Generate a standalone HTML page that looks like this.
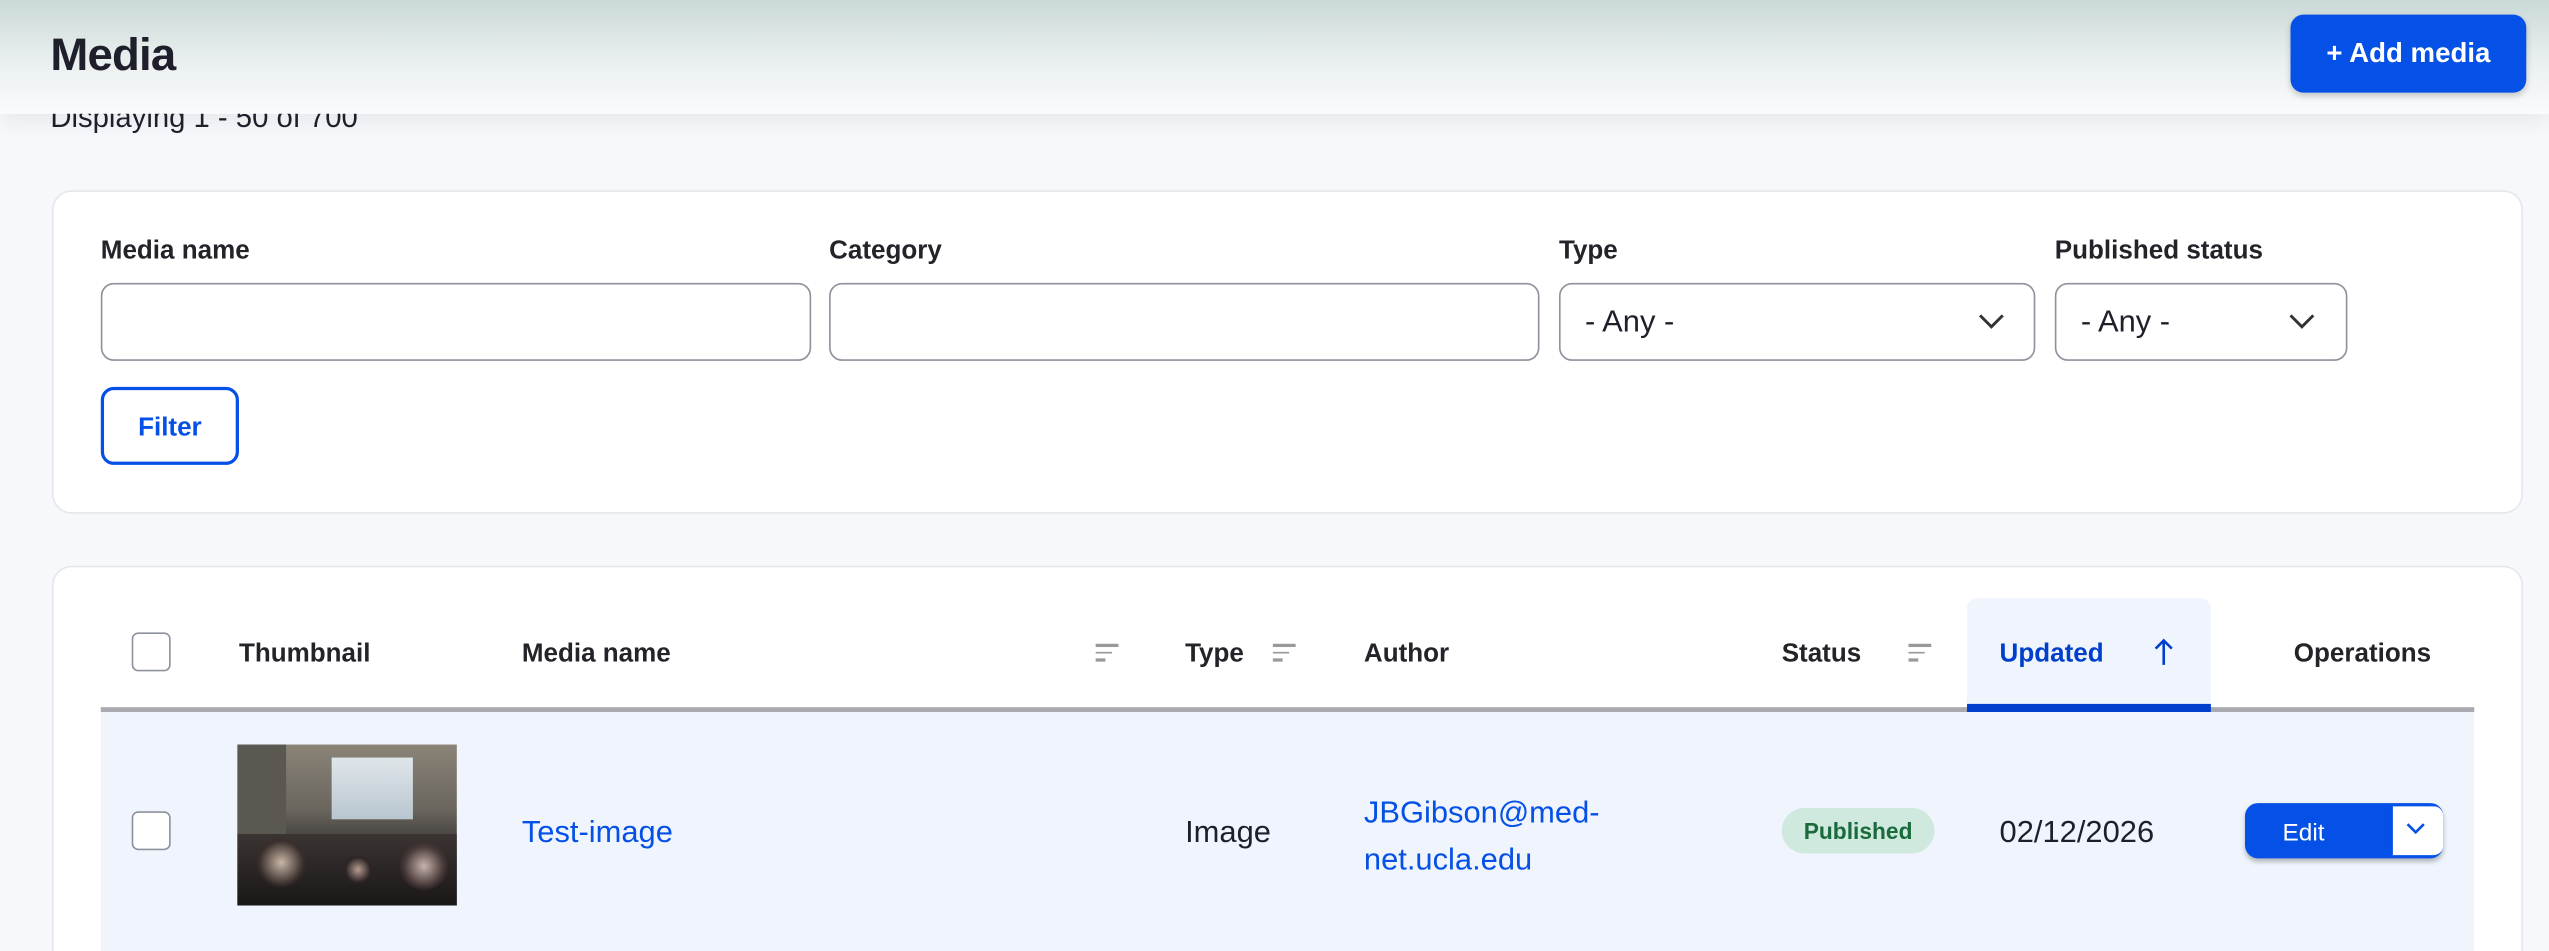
<!DOCTYPE html>
<html><head><meta charset="utf-8"><style>
html,body{margin:0;padding:0;width:2549px;height:951px;overflow:hidden;background:#f7f8fc;}
#clip{position:absolute;left:0;top:0;width:2549px;height:951px;overflow:hidden;}
#w{position:absolute;left:0;top:0;width:1568px;height:585px;overflow:hidden;transform:scale(1.62564);transform-origin:0 0;font-family:"Liberation Sans",sans-serif;color:#1f1f2b;}
.a{position:absolute;}
.lbl{font-size:16px;font-weight:bold;color:#232429;}
.inp{position:absolute;height:48px;border:1px solid #8e929c;border-radius:8px;background:#fff;box-sizing:border-box;}
.th{position:absolute;top:394px;font-size:16px;font-weight:bold;color:#232429;}
.cb{position:absolute;width:24px;height:24px;border:1px solid #8e929c;border-radius:4px;background:#fff;box-sizing:border-box;}
.sort{position:absolute;width:14px;height:10px;}
.sort i{display:block;height:1.5px;background:#999;margin-bottom:3px;}
</style></head><body><div id="clip"><div id="w">
<div class="a" style="left:0;top:0;width:1568px;height:70px;background:linear-gradient(#c9d9d7 0,#e8eeee 35px,#fafbfc 70px);box-shadow:0 6px 12px rgba(0,0,0,.06);"></div>
<div class="a" style="left:31px;top:18px;font-size:28px;font-weight:bold;letter-spacing:-0.5px;">Media</div>
<div class="a" style="left:31px;top:62px;font-size:18px;height:21px;overflow:hidden;clip-path:inset(8px 0 0 0);">Displaying 1 - 50 of 700</div>
<div class="a" style="left:1409px;top:9px;width:145px;height:48px;background:#0550e6;border-radius:8px;color:#fff;font-size:17px;font-weight:bold;text-align:center;line-height:48px;box-shadow:0 2px 4px rgba(0,0,0,.2);">+ Add media</div>

<div class="a" style="left:32px;top:117px;width:1520px;height:199px;background:#fff;border:1px solid #e5e7eb;border-radius:12px;box-sizing:border-box;"></div>
<div class="a lbl" style="left:62px;top:146px;">Media name</div>
<div class="a lbl" style="left:510px;top:146px;">Category</div>
<div class="a lbl" style="left:959px;top:146px;">Type</div>
<div class="a lbl" style="left:1264px;top:146px;">Published status</div>
<div class="inp" style="left:62px;top:174px;width:437px;"></div>
<div class="inp" style="left:510px;top:174px;width:437px;"></div>
<div class="inp" style="left:959px;top:174px;width:293px;font-size:19px;line-height:48px;padding-left:15px;">- Any -<svg style="position:absolute;right:18px;top:18px" width="16" height="10"><path d="M1 1l7 7 7-7" stroke="#333" stroke-width="1.8" fill="none"/></svg></div>
<div class="inp" style="left:1264px;top:174px;width:180px;font-size:19px;line-height:48px;padding-left:15px;">- Any -<svg style="position:absolute;right:19px;top:18px" width="16" height="10"><path d="M1 1l7 7 7-7" stroke="#333" stroke-width="1.8" fill="none"/></svg></div>
<div class="a" style="left:62px;top:238px;width:85px;height:48px;border:2px solid #0550e6;border-radius:8px;box-sizing:border-box;color:#0550e6;font-size:16px;font-weight:bold;text-align:center;line-height:48px;">Filter</div>

<div class="a" style="left:32px;top:348px;width:1520px;height:300px;background:#fff;border:1px solid #e5e7eb;border-radius:12px;box-sizing:border-box;"></div>
<div class="a" style="left:1210px;top:368px;width:150px;height:68px;background:#f0f5fd;border-radius:6px 6px 0 0;"></div>
<div class="cb" style="left:81px;top:389px;"></div>
<div class="th" style="left:147px;">Thumbnail</div>
<div class="th" style="left:321px;">Media name</div>
<div class="sort" style="left:674px;top:396px;"><i style="width:14px"></i><i style="width:10px"></i><i style="width:6px"></i></div>
<div class="th" style="left:729px;">Type</div>
<div class="sort" style="left:783px;top:396px;"><i style="width:14px"></i><i style="width:10px"></i><i style="width:6px"></i></div>
<div class="th" style="left:839px;">Author</div>
<div class="th" style="left:1096px;">Status</div>
<div class="sort" style="left:1174px;top:396px;"><i style="width:14px"></i><i style="width:10px"></i><i style="width:6px"></i></div>
<div class="th" style="left:1230px;color:#003ecc;">Updated</div>
<svg class="a" style="left:1325px;top:392px" width="12" height="18"><path d="M6 17V2M1 7l5-5 5 5" stroke="#003ecc" stroke-width="1.6" fill="none"/></svg>
<div class="th" style="left:1411px;">Operations</div>
<div class="a" style="left:62px;top:435px;width:1460px;height:3px;background:#a9abb1;"></div>
<div class="a" style="left:1210px;top:433px;width:150px;height:5px;background:#003ecc;"></div>

<div class="a" style="left:62px;top:438px;width:1460px;height:200px;background:#f0f5fd;"></div>
<div class="cb" style="left:81px;top:499px;"></div>
<div class="a" style="left:146px;top:458px;width:135px;height:99px;overflow:hidden;background:linear-gradient(180deg,#8a8478 0,#6b665e 40%,#2d2b2a 70%,#1e1c1c 100%);">
 <div class="a" style="left:58px;top:8px;width:50px;height:38px;background:linear-gradient(#dfe6ea,#b9c6cf);"></div>
 <div class="a" style="left:0;top:0;width:30px;height:60px;background:#5b5852;"></div>
 <div class="a" style="left:0;top:55px;width:135px;height:44px;background:radial-gradient(circle at 20% 40%,#c9b7a7 0,#3a2f2c 12%,transparent 14%),radial-gradient(circle at 55% 50%,#b79c91 0,#2c2424 10%,transparent 12%),radial-gradient(circle at 85% 45%,#c8b4ae 0,#4a3b3a 10%,transparent 13%),linear-gradient(#3b3433,#1a1717);"></div>
</div>
<div class="a" style="left:321px;top:502px;font-size:19px;color:#0550e6;">Test-image</div>
<div class="a" style="left:729px;top:502px;font-size:19px;">Image</div>
<div class="a" style="left:839px;top:486px;font-size:19px;line-height:29px;color:#0550e6;">JBGibson@med-<br>net.ucla.edu</div>
<div class="a" style="left:1096px;top:497px;width:94px;height:28px;background:#cfe9df;border-radius:14px;color:#1a6b3c;font-size:14px;font-weight:bold;text-align:center;line-height:28px;">Published</div>
<div class="a" style="left:1230px;top:502px;font-size:19px;">02/12/2026</div>
<div class="a" style="left:1381px;top:494px;width:122px;height:34px;background:#0550e6;border-radius:8px;box-shadow:0 2px 3px rgba(0,0,0,.25);"></div>
<div class="a" style="left:1470px;top:496px;width:31px;height:30px;background:#fff;border-radius:0 6px 6px 0;border-left:2px solid #0550e6;"></div>
<svg class="a" style="left:1480px;top:506px" width="12" height="8"><path d="M1 1l5 5 5-5" stroke="#0550e6" stroke-width="1.6" fill="none"/></svg>
<div class="a" style="left:1381px;top:496px;width:72px;height:34px;color:#fff;font-size:15px;text-align:center;line-height:34px;">Edit</div>
</div></div></body></html>
